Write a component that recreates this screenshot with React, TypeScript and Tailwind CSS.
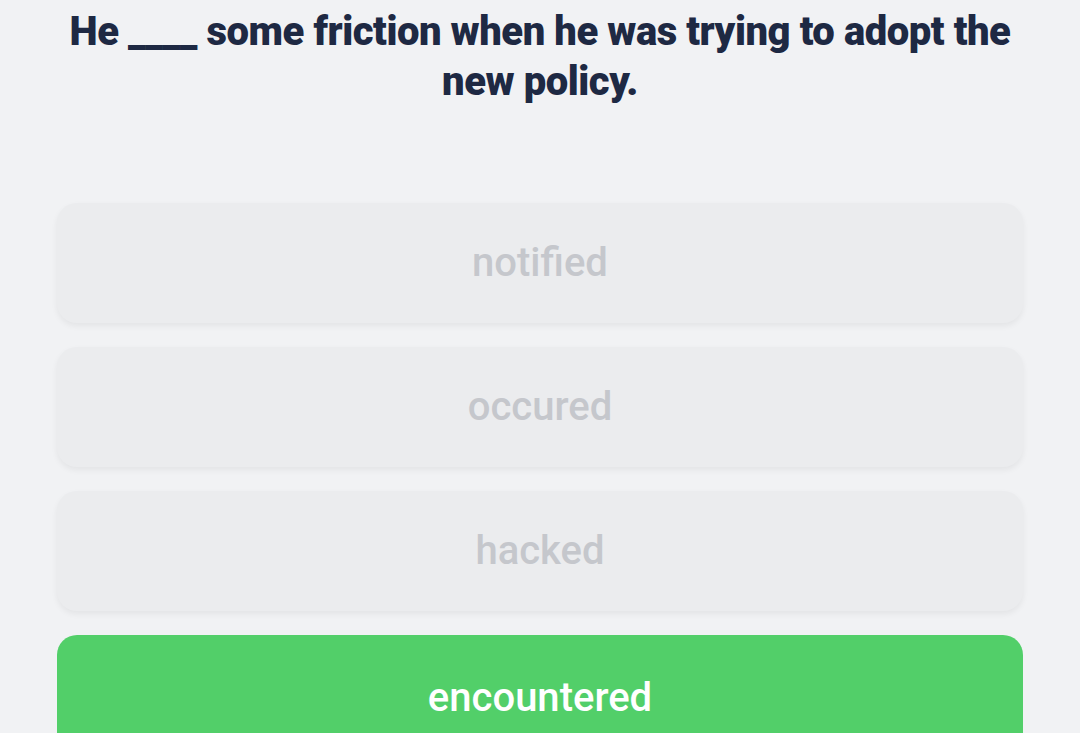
import React from "react";

const options = [
  { label: "notified", correct: false },
  { label: "occured", correct: false },
  { label: "hacked", correct: false },
  { label: "encountered", correct: true },
];

export default function App() {
  return (
    <div
      className="min-h-[733px] w-full bg-[#f1f2f4] overflow-hidden"
      style={{ fontFamily: "Roboto, 'Noto Sans', sans-serif" }}
    >
      <div className="px-[57px] pt-[7px]">
        <h1 className="text-center text-[40px] leading-[50px] font-black text-[#1e2943] tracking-[-0.45px]">
          He ____ some friction when he was trying to adopt the new policy.
        </h1>
        <div className="mt-[96px] flex flex-col gap-[24px]">
          {options.map((o) =>
            o.correct ? (
              <button
                key={o.label}
                className="h-[120px] w-full rounded-[20px] bg-[#52cf69] text-white text-[40px] font-medium pt-[6px]"
              >
                {o.label}
              </button>
            ) : (
              <button
                key={o.label}
                className="h-[120px] w-full rounded-[20px] bg-[#ebecee] text-[#c5c7cc] text-[40px] font-medium shadow-[0_3px_6px_rgba(0,0,0,0.06)]"
              >
                {o.label}
              </button>
            )
          )}
        </div>
      </div>
    </div>
  );
}
